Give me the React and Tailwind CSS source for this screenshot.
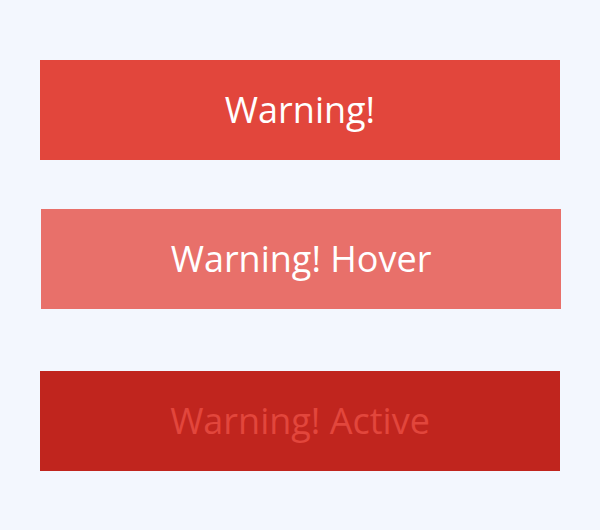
import React from 'react';

export default function App() {
  return (
    <div className="w-[600px] h-[530px] bg-[#f3f7fe] px-10 pt-[60px] font-['Open_Sans',sans-serif]">
      {/* Default */}
      <div className="h-[100px] bg-[#e2463c] flex items-center justify-center text-[36px] text-white">
        Warning!
      </div>
      {/* Hover */}
      <div className="h-[100px] mt-[49px] translate-x-[1px] bg-[#e8706a] flex items-center justify-center text-[36px] text-white">
        Warning! Hover
      </div>
      {/* Active */}
      <div className="h-[100px] mt-[62px] bg-[#c0251e] flex items-center justify-center text-[36px] text-[#e2463c]">
        Warning! Active
      </div>
    </div>
  );
}
